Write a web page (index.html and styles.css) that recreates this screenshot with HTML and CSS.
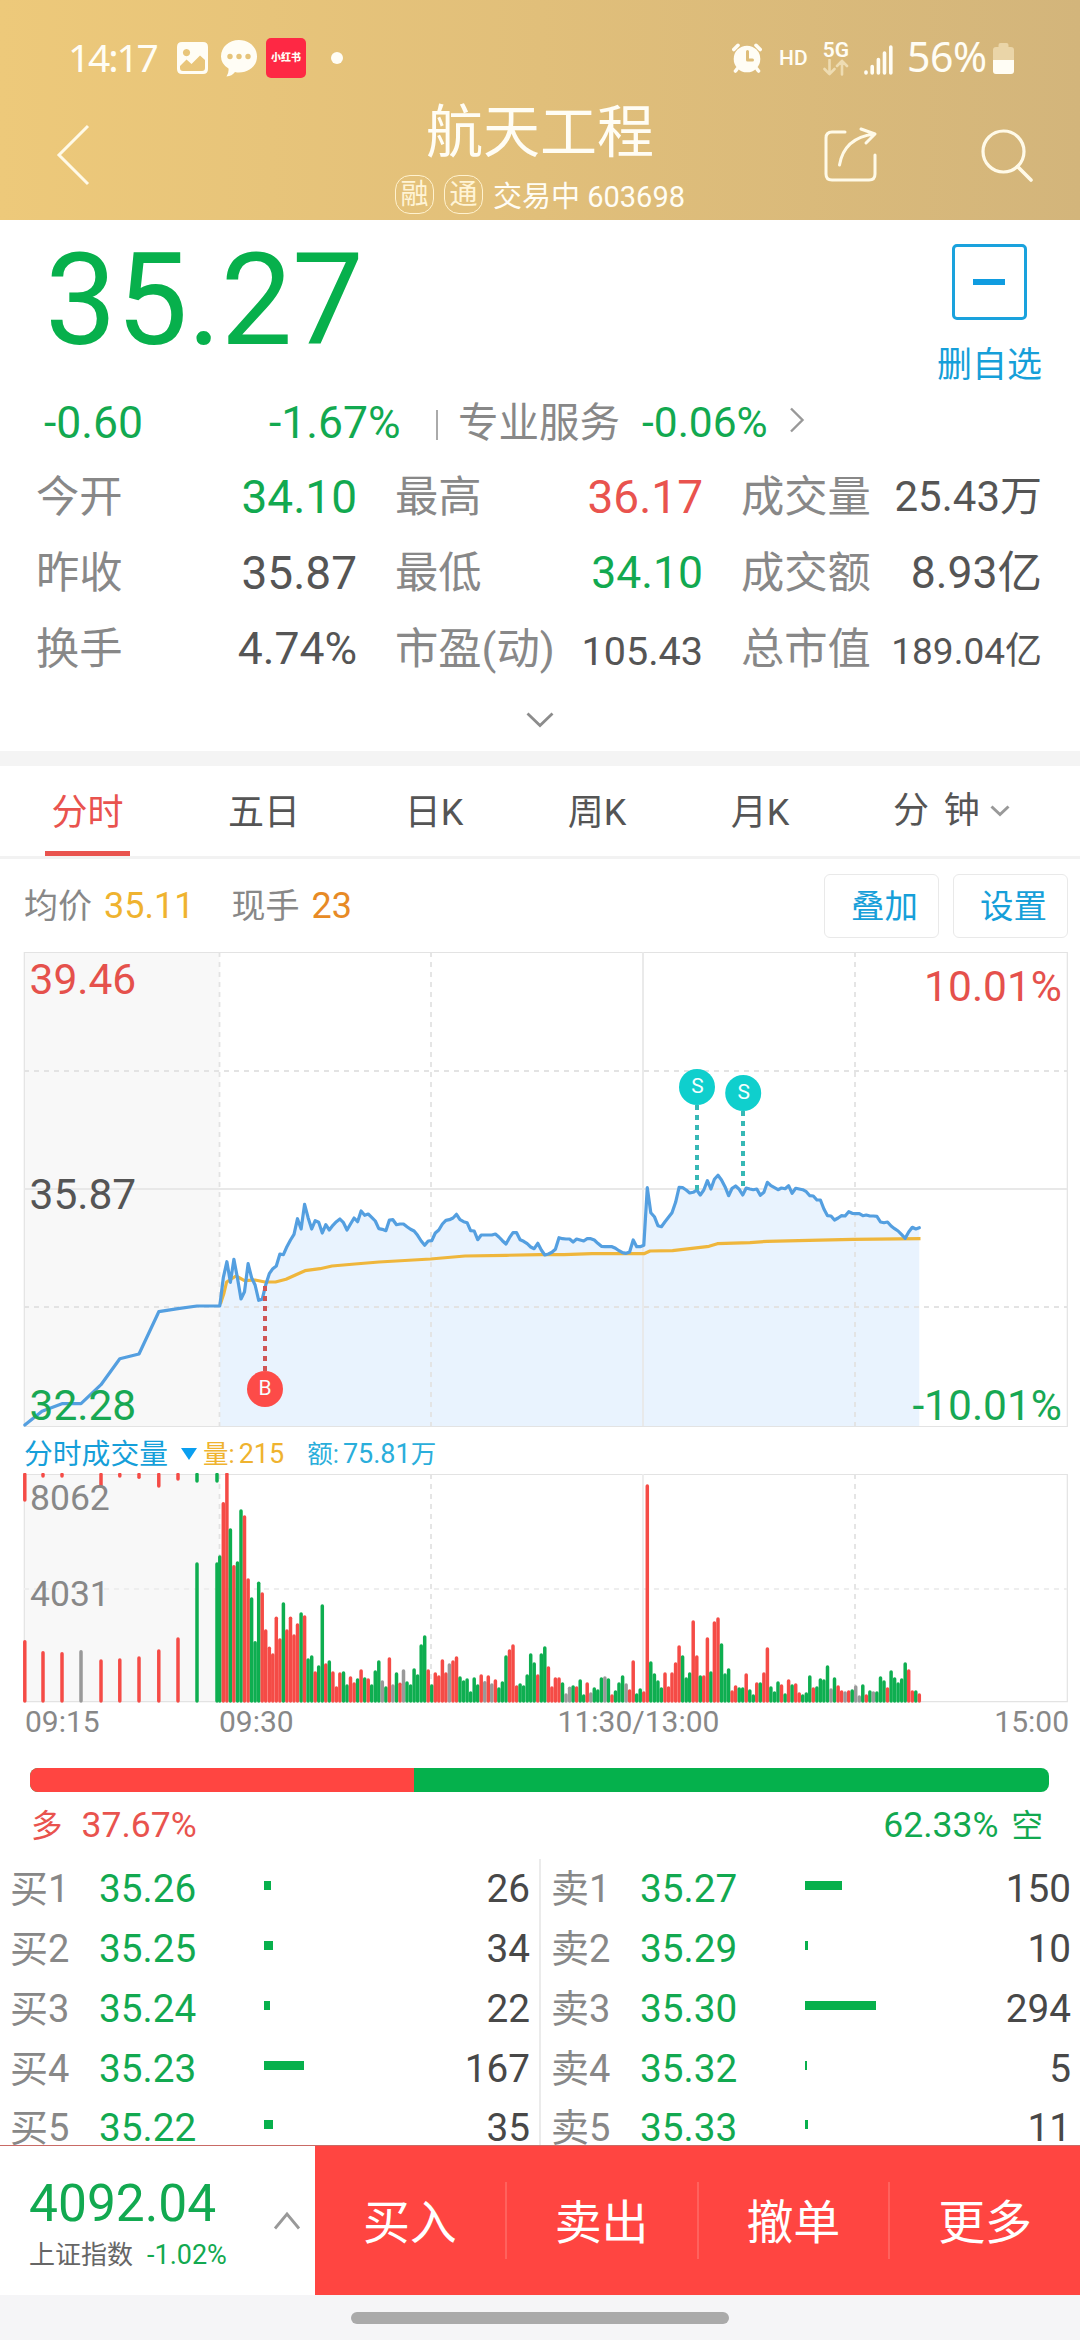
FILE: index.html
```html
<!DOCTYPE html>
<html lang="zh-CN">
<head>
<meta charset="utf-8">
<title>航天工程 603698</title>
<link rel="stylesheet" href="styles.css">
</head>
<body>
<header class="header">
  <div class="status">
    <span class="clock">14:17</span>
    <svg class="st-image" width="31" height="32" viewBox="0 0 31 32"><path fill="#fffdf5" fill-rule="evenodd" d="M5 0H26Q31 0 31 5V27Q31 32 26 32H5Q0 32 0 27V5Q0 0 5 0ZM9.500 7A3.600 3.600 0 1 0 9.510 7ZM3 26Q3 29 6 29H25Q28 29 28 26V18L23 13.500L14.500 22L9.500 17.500L3 24Z"/></svg>
    <svg class="st-chat" width="36" height="37" viewBox="0 0 36 37"><path fill="#fffdf5" d="M18 0C28 0 36 7 36 16.500S28 32.500 18 32.500Q16 32.500 14 32Q11 36 5.500 36.500Q8 33 7.500 28.500Q0 24 0 16.500C0 7 8 0 18 0Z"/><g fill="#e6c47a"><circle cx="9" cy="16.500" r="2.700"/><circle cx="18" cy="16.500" r="2.700"/><circle cx="27" cy="16.500" r="2.700"/></g></svg>
    <span class="st-app"><b>小红书</b></span>
    <i class="st-dot"></i>
    <span class="status-right">
      <svg width="30" height="30" viewBox="0 0 30 30"><circle cx="15" cy="16" r="13.300" fill="#fffdf5"/><path d="M1.800 6.500L6 2.300M28.200 6.500L24 2.300M5 26L3.500 28M25 26l1.500 2" stroke="#fffdf5" stroke-width="3.600" stroke-linecap="round"/><path d="M15.500 8.500V17H20.500" fill="none" stroke="#debd79" stroke-width="3" stroke-linecap="round" stroke-linejoin="round"/></svg>
      <span class="hd">HD</span>
      <span class="net"><b>5G</b><svg width="26" height="17" viewBox="0 0 26 17"><path d="M6.500 1V15M1.500 10L6.500 15.200L11.500 10M19 15.500V2M14 7L19 1.800L24 7" fill="none" stroke="#eedcb2" stroke-width="2.600" stroke-linecap="round" stroke-linejoin="round"/></svg></span>
      <svg class="signal" width="29" height="30" viewBox="0 0 29 30"><path d="M2 27v1M8.200 21.500v6.500M14.400 14.500v13.500M20.500 8v20M26.800 2v26" stroke="#fffdf5" stroke-width="3.600" stroke-linecap="round"/></svg>
      <span class="pct">56%</span>
      <svg class="batt" width="21" height="31" viewBox="0 0 21 31"><path d="M5.500 4V2Q5.500 0 7.500 0H13.500Q15.500 0 15.500 2V4H18Q21 4 21 7V17H0V7Q0 4 3 4Z" fill="#ead5a8"/><path d="M0 17H21V28Q21 31 18 31H3Q0 31 0 28Z" fill="#fffdf5"/></svg>
    </span>
  </div>
  <div class="titlebar">
    <svg class="back" width="34" height="62" viewBox="0 0 34 62"><path d="M32 2L3 31L32 60" fill="none" stroke="#fffae8" stroke-width="3"/></svg>
    <div class="title">
      <h1>航天工程</h1>
      <p><i>融</i><i>通</i><span>交易中 603698</span></p>
    </div>
    <svg class="share" width="54" height="56" viewBox="0 0 54 56"><path d="M21 5H8Q2 5 2 11V47Q2 53 8 53H45Q51 53 51 47V28M15.500 38Q20 11 50 7M37 2L51 7L42 16" fill="none" stroke="#fffae8" stroke-width="3" stroke-linecap="round" stroke-linejoin="round"/></svg>
    <svg class="search" width="53" height="54" viewBox="0 0 53 54"><circle cx="22.500" cy="22.500" r="20.500" fill="none" stroke="#fffae8" stroke-width="3.200"/><path d="M36.500 37.500L50 51" stroke="#fffae8" stroke-width="3.600" stroke-linecap="round"/></svg>
  </div>
</header>

<section class="quote">
  <div class="quote-top">
    <strong class="price">35.27</strong>
    <div class="fav"><span class="fav-box"><i></i></span><span>删自选</span></div>
  </div>
  <div class="change">
    <span class="chg green">-0.60</span><span class="chg-pct green">-1.67%</span><i class="bar"></i>
    <span class="sector">专业服务</span><span class="sector-pct green">-0.06%</span>
    <svg width="16" height="26" viewBox="0 0 16 26"><path d="M2 1.500L13.500 13L2 24.500" fill="none" stroke="#999" stroke-width="2.400"/></svg>
  </div>
  <dl class="stats">
    <div><dt>今开</dt><dd class="green">34.10</dd></div>
    <div><dt>最高</dt><dd class="red">36.17</dd></div>
    <div><dt>成交量</dt><dd class="s42">25.43万</dd></div>
    <div><dt>昨收</dt><dd>35.87</dd></div>
    <div><dt>最低</dt><dd class="s44 green">34.10</dd></div>
    <div><dt>成交额</dt><dd class="s44">8.93亿</dd></div>
    <div><dt>换手</dt><dd class="s44">4.74%</dd></div>
    <div><dt>市盈(动)</dt><dd class="s39">105.43</dd></div>
    <div><dt>总市值</dt><dd class="s37">189.04亿</dd></div>
  </dl>
  <svg class="expand" width="28" height="16" viewBox="0 0 28 16"><path d="M1.500 1.500L14 13.500L26.500 1.500" fill="none" stroke="#8c8c8c" stroke-width="2.800"/></svg>
</section>

<nav class="tabs">
  <span class="active">分时</span><span>五日</span><span>日K</span><span>周K</span><span>月K</span><span>分&thinsp;&thinsp;钟<svg width="20" height="12" viewBox="0 0 20 12"><path d="M1.500 1.500L10 9.500L18.500 1.500" fill="none" stroke="#999" stroke-width="3"/></svg></span>
</nav>

<div class="legend">
  <span>均价</span><b class="yellow">35.11</b><span class="second">现手</span><b class="orange">23</b>
  <button>叠加</button><button>设置</button>
</div>

<svg class="chart" width="1080" height="490" viewBox="0 0 1080 490">
  <rect x="24" y="12" width="195.500" height="474" fill="#f8f8f8"/>
  <path id="area" fill="#e9f3fe"/>
  <g fill="none" stroke="#e3e3e3">
    <path d="M24.300 12.500H1067.300V486.500H24.300Z" stroke-width="1.200"/>
    <path d="M24 249H1067M643 12V486" stroke-width="1.800" stroke="#e8e8e8"/>
    <path d="M24 131H1067M24 367H1067" stroke-width="1.800" stroke-dasharray="5 5"/>
    <path d="M219.500 12V486M431 12V486M855 12V486" stroke-width="1.800" stroke-dasharray="5 5"/>
  </g>
  <path d="M220.400 364L224 353L226.600 342L236 336L244.500 340.700L255 340L265 342H275.500L286 339.300L296 334.700L305 330.700L320 328.700L332 326L355 324L379 322L430.500 319L465 316L506 315.300L540 314.700H564L592 313.700H644L650 311L672.600 310.700L709 306.300L717.400 303.700L750 302.700L767 301.300L809 300.300L853 299.300L920.500 298.700" class="avg"/>
  <path d="M24.800 485L42 471.300L62 463.700H81L101 444.700L119.800 418.700L139 414L158.800 371.700L178 368.700L197 366H219.400" class="line"/>
  <path id="line" class="line"/>
  <g stroke-width="4" stroke-dasharray="5 5">
    <path d="M265 346V432" stroke="#cf5555"/>
    <path d="M697 165V250M743 171V250" stroke="#37b8b5"/>
  </g>
  <circle cx="265" cy="449" r="18" fill="#fd4b48"/>
  <circle cx="697" cy="147" r="18" fill="#0fcfcd"/><circle cx="743.200" cy="153" r="18" fill="#0fcfcd"/>
  <g class="mark"><text x="265" y="455">B</text><text x="697.500" y="153">S</text><text x="743.700" y="159">S</text></g>
  <g class="axis">
    <text x="29.500" y="54" fill="#e5514c">39.46</text>
    <text x="29.500" y="268.700" fill="#555">35.87</text>
    <text x="29.500" y="479.700" fill="#18a853">32.28</text>
    <text x="1062" y="61" fill="#e5514c" text-anchor="end">10.01%</text>
    <text x="1062" y="479.700" fill="#18a853" text-anchor="end">-10.01%</text>
  </g>
</svg>

<div class="vol-head">
  <span>分时成交量</span><svg width="16" height="14" viewBox="0 0 16 14"><path d="M0 1H16L8 13Z" fill="#0a9ff0"/></svg><span class="yellow">量:<em>215</em></span><span class="amount">额:<em>75.81</em>万</span>
</div>
<svg class="volume" width="1080" height="265" viewBox="0 43 1080 265">
  <rect x="24" y="44" width="195.500" height="228" fill="#f8f8f8"/>
  <g fill="none" stroke="#e3e3e3">
    <path d="M24.300 44.500H1067.300V271.700H24.300Z" stroke-width="1.200"/>
    <path d="M643 44V272" stroke-width="1.800" stroke="#ececec"/>
    <path d="M24 159H1067" stroke-width="1.800" stroke="#eee" stroke-dasharray="5 5"/>
    <path d="M219.500 44V272M431 44V272M855 44V272" stroke-width="1.800" stroke-dasharray="5 5"/>
  </g>
  <g id="bars" stroke-width="3.500" stroke-linecap="round"></g>
  <g class="vol-axis"><text x="30" y="80">8062</text><text x="30" y="176">4031</text></g>
  <g class="times"><text x="25" y="302">09:15</text><text x="219" y="302">09:30</text><text x="638.500" y="302" text-anchor="middle">11:30/13:00</text><text x="1069" y="302" text-anchor="end">15:00</text></g>
</svg>

<div class="ratio"><i style="width:37.67%"></i></div>
<div class="ratio-text"><span class="red">多<em>37.67%</em></span><span class="green"><em>62.33%</em>空</span></div>

<div class="book">
  <div class="side">
    <div class="row"><span>买1</span><b>35.26</b><i style="width:7px"></i><em>26</em></div>
    <div class="row"><span>买2</span><b>35.25</b><i style="width:9px"></i><em>34</em></div>
    <div class="row"><span>买3</span><b>35.24</b><i style="width:6px"></i><em>22</em></div>
    <div class="row"><span>买4</span><b>35.23</b><i style="width:40px"></i><em>167</em></div>
    <div class="row"><span>买5</span><b>35.22</b><i style="width:9px"></i><em>35</em></div>
  </div>
  <div class="side">
    <div class="row"><span>卖1</span><b>35.27</b><i style="width:37px"></i><em>150</em></div>
    <div class="row"><span>卖2</span><b>35.29</b><i style="width:3px"></i><em>10</em></div>
    <div class="row"><span>卖3</span><b>35.30</b><i style="width:71px"></i><em>294</em></div>
    <div class="row"><span>卖4</span><b>35.32</b><i style="width:2px"></i><em>5</em></div>
    <div class="row"><span>卖5</span><b>35.33</b><i style="width:3px"></i><em>11</em></div>
  </div>
</div>

<footer class="footer">
  <div class="index">
    <div><strong>4092.04</strong><p>上证指数<em>-1.02%</em></p></div>
    <svg width="28" height="20" viewBox="0 0 28 20"><path d="M2 17.500L14 3L26 17.500" fill="none" stroke="#999" stroke-width="2.800"/></svg>
  </div>
  <div class="actions"><span>买入</span><span>卖出</span><span>撤单</span><span>更多</span></div>
</footer>
<div class="gesture"><i></i></div>
<script src="chart.js"></script>
</body>
</html>
```

FILE: styles.css
```css
* { box-sizing: border-box; }
body { margin: 0; width: 1080px; height: 2340px; overflow: hidden; display: flex; flex-direction: column; background: #fff; color: #555; font-family: Roboto, "Noto Sans CJK SC", sans-serif; }
body > * { flex: none; }
h1, p, dl, dd { margin: 0; }
i, em { font-style: normal; }
b, h1, strong { font-weight: 400; }
svg { display: block; flex: none; }
.green { color: #12a950; }
.red { color: #e9534e; }
.yellow { color: #efb32f; }
.orange { color: #e78a25; }

.header { height: 220px; background: linear-gradient(90deg, #edc97a, #e1bf7a 50%, #d3b57b); color: #fffdf5; }
.status { display: flex; align-items: center; height: 116px; margin-bottom: -36px; padding: 0 66px 0 68px; }
.clock, .pct { font-family: "Noto Sans", sans-serif; font-size: 39px; line-height: 1; padding-bottom: 3px; }
.clock { width: 109px; letter-spacing: -2.200px; }
.st-chat { margin-left: 13px; }
.st-app { display: grid; place-items: center; width: 40px; height: 40px; margin-left: 9px; border-radius: 5px; background: #fe2844; }
.st-app b { font-size: 10px; font-weight: 900; line-height: 1; white-space: nowrap; }
.st-dot { width: 12px; height: 12px; margin-left: 25px; border-radius: 50%; background: #fffdf5; }
.status-right { display: flex; align-items: center; margin-left: auto; }
.hd { margin-left: 17px; font-size: 21px; font-weight: 500; }
.net { margin-left: 15px; display: flex; flex-direction: column; align-items: center; }
.net b { font-size: 21px; font-weight: 600; line-height: 18px; }
.signal { margin: 4px 14px 0 15px; }
.pct { width: 80px; font-size: 41px; letter-spacing: -.5px; }
.batt { margin-left: 6px; }
.titlebar { display: flex; height: 140px; padding: 15px 38px 0 56px; }
.back { margin-top: 29px; }
.title { width: 540px; margin-left: 180px; text-align: center; }
.title h1 { height: 72px; line-height: 75px; font-size: 57px; }
.title p { display: flex; justify-content: center; align-items: center; height: 60px; margin-top: -3px; font-size: 29px; }
.title p i { width: 39px; height: 39px; margin-right: 10px; border: 1.500px solid #fff2cf; border-radius: 15px; font-size: 28px; line-height: 38px; color: #fff4d6; }
.share { margin: 32px 0 0 14px; }
.search { margin: 34px 0 0 103px; }

.quote { height: 546px; border-bottom: 15px solid #f4f4f4; }
.quote-top { display: flex; justify-content: space-between; height: 165px; padding: 0 38px 0 45px; }
.price { font-size: 127.500px; line-height: 162px; color: #07b04c; letter-spacing: -.4px; }
.fav { display: flex; flex-direction: column; align-items: center; padding-top: 24px; font-size: 35px; line-height: 52px; color: #169fd9; }
.fav-box { flex: none; display: grid; place-items: center; width: 75px; height: 76px; margin-bottom: 20px; border: 3px solid #1aa2dd; border-radius: 5px; }
.fav-box i { width: 32px; height: 6px; background: #109ce0; }
.change { display: flex; align-items: center; height: 76px; padding-left: 44px; line-height: 76px; }
.chg { width: 225px; font-size: 44.500px; }
.chg-pct { width: 168px; font-size: 44.500px; }
.change .bar { width: 2px; height: 30px; margin: 4px 20px 0 -1px; flex: none; background: #aaa; }
.sector { width: 184px; font-size: 40.500px; line-height: 78px; color: #888; white-space: nowrap; }
.sector-pct { width: 147px; font-size: 42.500px; line-height: 74px; }
.change svg { margin-top: -6px; }
.stats { display: grid; grid-template-columns: 321px 308px 301px; column-gap: 38px; grid-auto-rows: 75.800px; margin: -2px 0 0 36px; }
.stats div { display: flex; justify-content: space-between; line-height: 76px; white-space: nowrap; }
.stats dt { font-size: 43.300px; padding-top: 1px; color: #888; }
.stats dd { font-size: 46px; }
.stats .s44 { font-size: 44.500px; }
.stats .s42 { font-size: 42px; }
.stats .s39 { font-size: 39.500px; padding-top: 3px; }
.stats .s37 { font-size: 37px; padding-top: 3px; }
.expand { margin: 26px auto 0; }

.tabs { display: flex; height: 93px; border-bottom: 3px solid #f2f2f2; font-size: 36px; line-height: 95px; white-space: nowrap; }
.tabs span { flex: 0 0 162px; text-align: center; }
.tabs span:nth-child(1) { flex-basis: 85px; margin-left: 45px; }
.tabs span:nth-child(2) { margin-left: 53px; }
.tabs span:nth-child(3) { margin-left: 8px; }
.tabs span:nth-child(4) { margin-left: 1px; }
.tabs span:nth-child(5) { margin-left: 1px; }
.tabs span:nth-child(6) { display: flex; align-items: center; flex-basis: 150px; margin-left: 52px; height: 90px; }
.tabs svg { margin-left: 10px; }
.tabs .active { color: #e9534e; border-bottom: 5px solid #e9534e; }

.legend { display: flex; align-items: center; height: 81px; padding: 13px 12px 0 24px; font-size: 34px; line-height: 64px; color: #888; }
.legend b { font-size: 36px; margin-left: 12px; }
.legend .second { margin-left: 37px; }
.legend button { width: 115px; height: 64px; margin-left: 14px; padding: 0 0 0 6px; border: 1.500px solid #e9e9e9; border-radius: 6px; background: #fff; font: 33.500px/61px Roboto, "Noto Sans CJK SC", sans-serif; color: #169fd9; }
.legend .orange + button { margin-left: auto; }

.avg { fill: none; stroke: #efb63c; stroke-width: 3.200; stroke-linejoin: round; }
.line { fill: none; stroke: #549fe0; stroke-width: 3.200; stroke-linejoin: round; stroke-linecap: round; }
.mark { font-size: 21px; fill: #f4ffff; text-anchor: middle; }
.axis { font-size: 42.500px; }

.vol-head { display: flex; align-items: center; height: 43px; padding: 5px 0 0 24px; font-size: 28.800px; line-height: 38px; color: #169fd9; white-space: nowrap; }
.vol-head svg { margin: 0 6px 0 13px; }
.vol-head .yellow, .vol-head .amount { font-size: 25.500px; }
.vol-head em { margin-left: 4px; font-size: 27px; }
.vol-head .amount { margin-left: 23px; color: #2aaedb; }
.vol-axis { font-size: 35.500px; fill: #888; }
.times { font-size: 30px; fill: #888; }

.ratio { height: 24px; margin: 30px 31px 0 30px; border-radius: 8px; background: #05b14c; overflow: hidden; }
.ratio i { display: block; height: 24px; background: #ff4541; }
.ratio-text { display: flex; justify-content: space-between; height: 67px; padding: 0 37px 0 31px; font-size: 31.500px; line-height: 66px; }
.ratio-text em { font-size: 35.500px; }
.ratio-text .red em { margin-left: 19px; }
.ratio-text .green em { margin-right: 13px; }

.book { display: flex; height: 286px; }
.side { width: 539px; }
.side + .side { width: 541px; border-left: 2px solid #ebebeb; }
.row { display: flex; align-items: center; height: 60px; padding: 0 9px 0 10px; font-size: 38.700px; line-height: 58px; }
.row:last-child { height: 46px; line-height: 44px; margin-top: 0; padding-top: 12px; }
.row span { width: 89px; color: #888; font-size: 38px; }
.row b { width: 165px; color: #12a950; }
.row i { height: 9px; margin-top: -8px; background: #07b04c; }
.row em { margin-left: auto; color: #484848; }

.footer { display: flex; height: 150px; border-top: 1.500px solid #c96a65; }
.index { display: flex; align-items: center; justify-content: space-between; width: 315px; padding: 6px 14px 0 29px; }
.index svg { margin-top: -6px; }
.index strong { display: block; font-size: 51.500px; line-height: 62px; color: #12a950; }
.index p { font-size: 26px; line-height: 40px; color: #666; white-space: nowrap; }
.index em { margin-left: 14px; font-size: 27px; color: #12a950; }
.actions { flex: 1; display: flex; background: #ff4541; color: #fff; font-size: 47px; }
.actions span { flex: 1; margin: 36px 0; line-height: 82px; text-align: center; }
.actions span + span { border-left: 2px solid #ff625d; }
.gesture { height: 45px; padding-top: 17px; background: #f5f5f7; }
.gesture i { display: block; width: 378px; height: 12px; margin: 0 auto; border-radius: 6px; background: #aaa; }
```

FILE: chart.js
```js
// One sample per trading minute, measured down from the top of the plot in thirds of a pixel.
const price = [
  1097,1013,965,1027,958,1015,1077,1055,971,1013,1035,1081,1078,1035,1001,986,978,942,944,920,
  900,883,836,867,793,833,867,842,847,879,854,870,856,845,837,848,870,852,834,845,
  813,826,822,832,843,866,868,872,840,839,854,852,852,860,868,873,886,903,916,903,
  902,879,870,852,841,839,834,823,839,845,848,872,873,899,885,885,885,885,882,891,
  902,912,893,878,878,899,904,911,921,926,910,930,945,942,937,928,893,896,897,897,
  906,897,900,903,896,896,900,910,919,920,920,920,925,932,938,940,936,900,920,920,
  916,743,818,830,857,860,845,832,818,787,742,743,750,759,757,750,765,750,722,747,
  718,706,720,740,767,745,738,748,765,744,747,749,747,766,757,727,737,743,749,744,
  746,737,760,745,747,749,755,767,768,780,780,807,827,828,840,834,827,828,815,820,
  821,821,827,825,828,828,829,846,848,846,858,866,873,884,895,876,862,867,863
];
// Bar tops per minute in the same unit: r = up, g = down, n = unchanged.
const volume = `g378 r218 r130 g297 r407 g396 g240 r258 r447 g504 g635 g457 r489 r600 r652 r672 r562 r627 g519 r600
r562 r615 r582 g549 r558 g687 g678 r726 g708 g525 r702 g693 r726 r771 r729 g726 g765 r741 r759 g747
r720 g744 r747 g765 g723 g693 n753 g771 r684 n765 g729 r760 n720 g756 g765 g717 g735 g645 g618 r720
g765 r729 r738 r690 r729 n702 r693 r681 g741 g753 g747 g786 g744 g765 r735 n755 r738 n762 r750 g774
g756 g678 r660 r645 r768 g762 g768 g735 g672 g699 r735 g672 g651 r711 r771 r744 r744 g759 n792 n772
g768 r771 g750 g795 r759 n789 g774 g780 g744 n741 g747 r795 g783 g759 g738 n762 r780 r693 g792 g777
r786 r165 g696 g732 g753 g774 r729 r771 r729 r699 r648 g678 g744 g729 r573 r678 g738 r738 r624 g726
r576 r564 g642 g732 g717 r783 r768 g774 g774 r732 g780 g795 r759 g759 r729 r654 g771 g786 g756 r765
g792 r750 g765 r762 r789 g795 g789 g738 r774 g771 g747 g750 g708 n777 g744 r768 r783 n786 r783 g780
n768 n798 g765 r795 g783 n786 g786 g741 g753 r774 g723 g744 g759 g747 g699 r720 r783 g783 r792`.split(/\s+/);
// Call auction: x, colour, lower bar top, upper tick bottom.
const auction = [
  [24.8,'r',632,213],[43,'r',665,141],[62,'r',668,141],[81,'n',662,0],[101,'r',690,171],[119.8,'r',687,141],
  [139,'r',681,145],[158.8,'r',660,171],[178,'r',624,150],[197,'g',399,156],[217,'g',399,156]
];
const colors = { r: '#f54b46', g: '#0eae50', n: '#999' };
const x = k => 219.8 + 3.533 * k;
const path = price.map((y, k) => `${x(k).toFixed(1)} ${(y / 3).toFixed(1)}`).join('L');
document.getElementById('line').setAttribute('d', 'M' + path);
document.getElementById('area').setAttribute('d', `M219.8 486L${path}V486Z`);
const bar = (cx, c, y1, y2) => `<path d="M${cx.toFixed(1)} ${y1.toFixed(1)}V${y2.toFixed(1)}" stroke="${colors[c]}"/>`;
let out = '';
for (const [cx, c, top, tick] of auction) {
  out += bar(cx, c, top / 3 + 1, 271);
  if (tick) out += bar(cx, c, 44.5, tick / 3 - 1);
}
volume.forEach((v, k) => { out += bar(x(k), v[0], v.slice(1) / 3 + 1, 271); });
document.getElementById('bars').innerHTML = out;
```
